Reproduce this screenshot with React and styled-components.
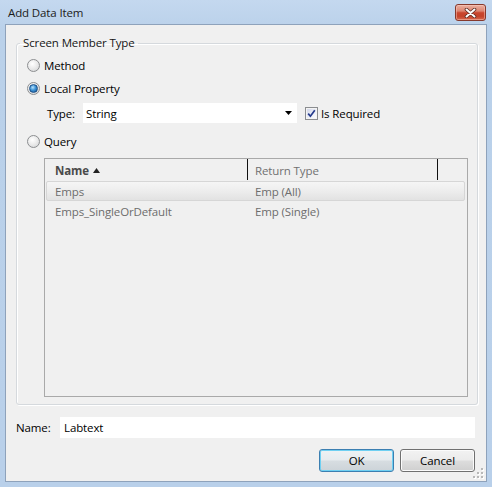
import React from "react";
import styled, { createGlobalStyle, css } from "styled-components";

const Global = createGlobalStyle`
  html, body { margin: 0; padding: 0; background: #b9d1ea; }
  body {
    font-family: "Open Sans", "Noto Sans", sans-serif;
    font-size: 11.5px;
    letter-spacing: -0.12px;
    color: #000;
  }
  * { box-sizing: border-box; }
`;

const Window = styled.div`
  width: 492px;
  height: 487px;
  display: flex;
  flex-direction: column;
  background: linear-gradient(180deg, #c4d8ef 0%, #bad1ea 6%, #b9d0ea 100%);
`;

const TitleBar = styled.div`
  height: 24px;
  flex: none;
  display: flex;
  align-items: center;
  justify-content: space-between;
  padding: 0 6px 0 8px;
`;

const Title = styled.span`
  font-size: 11.5px;
  color: #1b1b1b;
`;

const CloseButton = styled.div`
  width: 31px;
  height: 17px;
  margin-top: 1px;
  border: 1px solid #86392c;
  border-radius: 3px;
  display: flex;
  align-items: center;
  justify-content: center;
  background: linear-gradient(180deg, #eab0a2 0%, #dd8672 40%, #c9462e 52%, #c4432a 75%, #d7694f 100%);
  box-shadow: inset 0 0 0 1px rgba(255, 210, 200, 0.45);
`;

const Client = styled.div`
  flex: 1;
  margin: 0 5px 5px 5px;
  border: 1px solid #8ea2bb;
  background: #f0f0f0;
  position: relative;
  display: flex;
  flex-direction: column;
  padding: 10px 8px 0 10px;
`;

const Group = styled.fieldset`
  margin: 0;
  padding: 0 9px 7px 0;
  border: 1px solid #d5d9dd;
  border-radius: 3px;
  box-shadow: inset 1px 1px 0 #ffffff, 1px 1px 0 #ffffff;
  display: flex;
  flex-direction: column;
  min-width: 0;
`;

const Legend = styled.legend`
  margin-left: 3px;
  padding: 0 3px;
  line-height: 16px;
  color: #151515;
`;

const OptionRow = styled.label`
  height: 23px;
  display: flex;
  align-items: center;
  gap: 4px;
  margin-left: 10px;
  margin-top: ${(p) => p.$top || 0}px;
`;

const RadioCircle = styled.span`
  width: 13px;
  height: 13px;
  flex: none;
  border-radius: 50%;
  border: 1px solid #8c8e90;
  background: radial-gradient(circle at 40% 35%, #ffffff 0%, #ececec 45%, #cfd1d3 100%);
  display: flex;
  align-items: center;
  justify-content: center;
  ${(p) =>
    p.$checked &&
    css`
      &::after {
        content: "";
        width: 7px;
        height: 7px;
        border-radius: 50%;
        border: 1px solid #1c4f86;
        background: radial-gradient(circle at 40% 35%, #b9e3fb 0%, #3d93d6 45%, #11508f 100%);
      }
    `}
`;

const TypeRow = styled.div`
  height: 22px;
  margin-top: 2px;
  padding-left: 30px;
  display: flex;
  align-items: center;
`;

const FieldLabel = styled.span`
  width: ${(p) => p.$w}px;
  flex: none;
`;

const Combo = styled.div`
  width: 214px;
  height: 20px;
  background: #ffffff;
  display: flex;
  align-items: center;
  justify-content: space-between;
  padding: 0 5px 0 3px;
`;

const CheckLabel = styled.label`
  display: flex;
  align-items: center;
  gap: 3px;
  margin-left: 8px;
`;

const CheckBox = styled.span`
  width: 13px;
  height: 13px;
  flex: none;
  border: 1px solid #8b8d90;
  background: linear-gradient(135deg, #cfd3e6 0%, #e9ecf6 50%, #ffffff 100%);
  box-shadow: inset 0 0 0 1px #f4f4f4;
  display: flex;
  align-items: center;
  justify-content: center;
`;

const List = styled.div`
  margin: 5px 0 0 27px;
  height: 239px;
  border: 1px solid #a9a9a9;
  background: #f0f0f0;
  display: flex;
  flex-direction: column;
`;

const Header = styled.div`
  height: 22px;
  display: grid;
  grid-template-columns: 202px 1px 189px 1px;
  align-items: stretch;
`;

const HeaderCell = styled.div`
  display: flex;
  align-items: center;
  gap: 4px;
  padding-left: ${(p) => p.$pad}px;
  color: ${(p) => (p.$bold ? "#4a4a4a" : "#707070")};
  font-weight: ${(p) => (p.$bold ? 700 : 400)};
`;

const HeaderSep = styled.div`
  background: #111;
  margin-bottom: 1px;
`;

const Row = styled.div`
  height: 20px;
  margin: 0 2px 0 1px;
  border: 1px solid transparent;
  border-radius: 2px;
  display: grid;
  grid-template-columns: 201px 1fr;
  align-items: center;
  color: #6d6d6d;
  ${(p) =>
    p.$selected &&
    css`
      border-color: #d6d6d6;
      background: linear-gradient(180deg, #f5f5f5 0%, #ececec 55%, #e2e2e2 100%);
    `}
`;

const Cell = styled.span`
  padding-left: ${(p) => p.$pad}px;
  white-space: nowrap;
`;

const NameRow = styled.div`
  margin: 12px 3px 0 0;
  height: 21px;
  display: flex;
  align-items: center;
`;

const TextBox = styled.div`
  flex: 1;
  height: 21px;
  background: #ffffff;
  display: flex;
  align-items: center;
  padding-left: 4px;
`;

const ButtonRow = styled.div`
  margin: 11px 3px 0 0;
  display: flex;
  justify-content: flex-end;
  gap: 6px;
`;

const Button = styled.div`
  width: 75px;
  height: 23px;
  border-radius: 3px;
  display: flex;
  align-items: center;
  justify-content: center;
  border: 1px solid #707070;
  background: linear-gradient(180deg, #f2f2f2 0%, #ebebeb 48%, #dddddd 52%, #cfcfcf 100%);
  box-shadow: inset 0 0 0 1px #fbfbfb;
  ${(p) =>
    p.$default &&
    css`
      border-color: #3c7fb1;
      background: linear-gradient(180deg, #eef2f4 0%, #e6ebee 48%, #d7dde1 52%, #ccd3d8 100%);
      box-shadow: inset 0 0 0 1px #6fd0f2;
    `}
`;

const Grip = styled.svg`
  position: absolute;
  right: 2px;
  bottom: 2px;
`;

function Radio({ checked, top, children }) {
  return (
    <OptionRow $top={top}>
      <RadioCircle $checked={checked} />
      {children}
    </OptionRow>
  );
}

export default function App() {
  return (
    <>
      <Global />
      <Window>
        <TitleBar>
          <Title>Add Data Item</Title>
          <CloseButton>
            <svg width="13" height="10" viewBox="0 0 13 10">
              <path d="M2.5 1.5 L10.5 8.5 M10.5 1.5 L2.5 8.5" stroke="#5a2a22" strokeWidth="3.6" strokeLinecap="round" />
              <path d="M2.5 1.5 L10.5 8.5 M10.5 1.5 L2.5 8.5" stroke="#ffffff" strokeWidth="2" strokeLinecap="round" />
            </svg>
          </CloseButton>
        </TitleBar>
        <Client>
          <Group>
            <Legend>Screen Member Type</Legend>
            <Radio top={3}>Method</Radio>
            <Radio checked>Local Property</Radio>
            <TypeRow>
              <FieldLabel $w={36}>Type:</FieldLabel>
              <Combo>
                <span>String</span>
                <svg width="7" height="4" viewBox="0 0 7 4">
                  <path d="M0 0 H7 L3.5 4 Z" fill="#000" />
                </svg>
              </Combo>
              <CheckLabel>
                <CheckBox>
                  <svg width="9" height="9" viewBox="0 0 9 9">
                    <path d="M1.2 4.6 L3.4 7.2 L7.8 1.2" stroke="#243a8c" strokeWidth="1.7" fill="none" />
                  </svg>
                </CheckBox>
                Is Required
              </CheckLabel>
            </TypeRow>
            <Radio top={6}>Query</Radio>
            <List>
              <Header>
                <HeaderCell $pad={10} $bold>
                  Name
                  <svg width="7" height="5" viewBox="0 0 7 5">
                    <path d="M0 5 H7 L3.5 0 Z" fill="#222" />
                  </svg>
                </HeaderCell>
                <HeaderSep />
                <HeaderCell $pad={7}>Return Type</HeaderCell>
                <HeaderSep />
              </Header>
              <Row $selected>
                <Cell $pad={8}>Emps</Cell>
                <Cell $pad={7}>Emp (All)</Cell>
              </Row>
              <Row>
                <Cell $pad={8}>Emps_SingleOrDefault</Cell>
                <Cell $pad={7}>Emp (Single)</Cell>
              </Row>
            </List>
          </Group>
          <NameRow>
            <FieldLabel $w={44}>Name:</FieldLabel>
            <TextBox>Labtext</TextBox>
          </NameRow>
          <ButtonRow>
            <Button $default>OK</Button>
            <Button>Cancel</Button>
          </ButtonRow>
          <Grip width="11" height="11" viewBox="0 0 11 11">
            {[
              [9, 1], [9, 5], [9, 9], [5, 5], [5, 9], [1, 9],
            ].map(([x, y]) => (
              <g key={`${x}-${y}`}>
                <rect x={x} y={y} width="2" height="2" fill="#ffffff" />
                <rect x={x - 1} y={y - 1} width="2" height="2" fill="#b8b8b8" />
              </g>
            ))}
          </Grip>
        </Client>
      </Window>
    </>
  );
}
